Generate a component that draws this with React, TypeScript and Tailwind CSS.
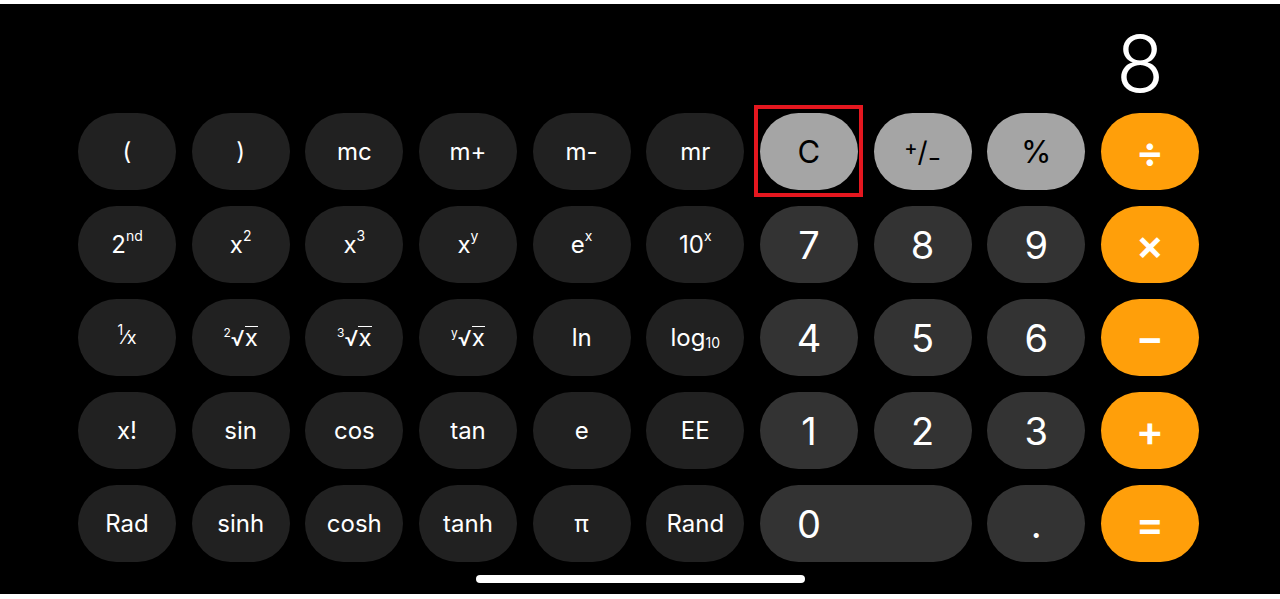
import type { ReactNode } from "react";

type Kind = "sci" | "num" | "fn" | "op";

type Key = { label: ReactNode; kind: Kind; wide?: boolean; marked?: boolean };

const KIND_STYLE: Record<Kind, string> = {
  sci: "bg-[#212121] text-white text-[24px]",
  num: "bg-[#333333] text-white text-[38px]",
  fn: "bg-[#a5a5a5] text-black text-[31px]",
  op: "bg-[#ff9f0a] text-white text-[42px] font-semibold",
};

const Sup = ({ children }: { children: ReactNode }) => (
  <span className="relative -top-[9px] text-[14px] leading-none">{children}</span>
);

const Sub = ({ children }: { children: ReactNode }) => (
  <span className="relative top-[5px] text-[14px] leading-none">{children}</span>
);

const Root = ({ n }: { n: string }) => (
  <span className="flex items-baseline">
    <span className="relative -top-[9px] text-[12px] leading-none">{n}</span>
    <span className="text-[22px]">√</span>
    <span className="border-t-[1.5px] border-white pt-[1px] leading-[20px]">x</span>
  </span>
);

const keys: Key[] = [
  { label: "(", kind: "sci" },
  { label: ")", kind: "sci" },
  { label: "mc", kind: "sci" },
  { label: "m+", kind: "sci" },
  { label: "m-", kind: "sci" },
  { label: "mr", kind: "sci" },
  { label: "C", kind: "fn", marked: true },
  {
    label: (
      <span className="flex items-baseline text-[28px]">
        <span className="relative -top-[7px] text-[20px] font-medium leading-none">+</span>
        <span>/</span>
        <span className="relative top-[3px] text-[20px] font-medium leading-none">−</span>
      </span>
    ),
    kind: "fn",
  },
  { label: "%", kind: "fn" },
  { label: "÷", kind: "op" },

  { label: <>2<Sup>nd</Sup></>, kind: "sci" },
  { label: <>x<Sup>2</Sup></>, kind: "sci" },
  { label: <>x<Sup>3</Sup></>, kind: "sci" },
  { label: <>x<Sup>y</Sup></>, kind: "sci" },
  { label: <>e<Sup>x</Sup></>, kind: "sci" },
  { label: <>10<Sup>x</Sup></>, kind: "sci" },
  { label: "7", kind: "num" },
  { label: "8", kind: "num" },
  { label: "9", kind: "num" },
  { label: "×", kind: "op" },

  {
    label: (
      <span className="flex items-baseline">
        <Sup>1</Sup>
        <span className="text-[18px]">⁄</span>
        <span className="text-[18px]">x</span>
      </span>
    ),
    kind: "sci",
  },
  { label: <Root n="2" />, kind: "sci" },
  { label: <Root n="3" />, kind: "sci" },
  { label: <Root n="y" />, kind: "sci" },
  { label: "ln", kind: "sci" },
  { label: <>log<Sub>10</Sub></>, kind: "sci" },
  { label: "4", kind: "num" },
  { label: "5", kind: "num" },
  { label: "6", kind: "num" },
  { label: "−", kind: "op" },

  { label: "x!", kind: "sci" },
  { label: "sin", kind: "sci" },
  { label: "cos", kind: "sci" },
  { label: "tan", kind: "sci" },
  { label: "e", kind: "sci" },
  { label: "EE", kind: "sci" },
  { label: "1", kind: "num" },
  { label: "2", kind: "num" },
  { label: "3", kind: "num" },
  { label: "+", kind: "op" },

  { label: "Rad", kind: "sci" },
  { label: "sinh", kind: "sci" },
  { label: "cosh", kind: "sci" },
  { label: "tanh", kind: "sci" },
  { label: "π", kind: "sci" },
  { label: "Rand", kind: "sci" },
  { label: "0", kind: "num", wide: true },
  { label: ".", kind: "num" },
  { label: "=", kind: "op" },
];

function CalcKey({ k }: { k: Key }) {
  if (k.wide) {
    return (
      <button className={`col-span-2 flex items-center rounded-full ${KIND_STYLE[k.kind]}`}>
        <span className="w-[98px] text-center">{k.label}</span>
      </button>
    );
  }
  return (
    <button className={`relative flex items-center justify-center rounded-full ${KIND_STYLE[k.kind]}`}>
      {k.label}
      {k.marked && (
        <span className="absolute -left-[6px] -right-[5px] -top-[8px] -bottom-[7px] border-[4.5px] border-[#e5171f]" />
      )}
    </button>
  );
}

export default function App() {
  return (
    <div className="flex h-[599px] w-full flex-col bg-white" style={{ fontFamily: "Inter, 'Liberation Sans', sans-serif" }}>
      <div className="mt-[4px] flex h-[590px] flex-col bg-black">
        {/* Display */}
        <div className="h-[109px] pr-[116px] pt-[21px] text-right text-[78px] font-light leading-none text-white">
          8
        </div>

        {/* Keypad */}
        <div className="ml-[78px] grid grid-cols-[repeat(10,98px)] auto-rows-[77px] gap-x-[15.67px] gap-y-[16px] leading-none">
          {keys.map((k, i) => (
            <CalcKey key={i} k={k} />
          ))}
        </div>

        {/* Home indicator */}
        <div className="mx-auto mt-[13px] h-[8px] w-[329px] rounded-full bg-white" />
      </div>
    </div>
  );
}
